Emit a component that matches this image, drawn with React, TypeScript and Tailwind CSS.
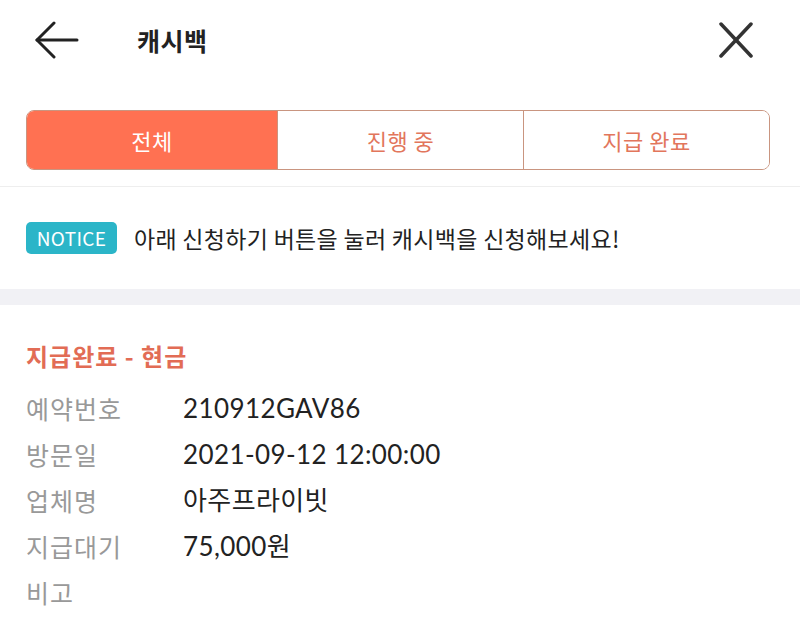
import { useState } from 'react';

const TABS = ['전체', '진행 중', '지급 완료'] as const;

const ROWS: [string, string][] = [
  ['예약번호', '210912GAV86'],
  ['방문일', '2021-09-12 12:00:00'],
  ['업체명', '아주프라이빗'],
  ['지급대기', '75,000원'],
  ['비고', ''],
];

const KR = "font-['Noto_Sans_CJK_KR',sans-serif]";
const VAL = "font-['Lato','Noto_Sans_CJK_KR',sans-serif]";

export default function App() {
  const [active, setActive] = useState(0);

  return (
    <div className={`h-[634px] w-[800px] overflow-hidden bg-white text-[#222] ${KR}`}>
      {/* Header */}
      <div className="flex h-[80px] items-center px-[35px]">
        <svg width="44" height="38" viewBox="0 0 44 38" fill="none" stroke="#222" strokeWidth="3" strokeLinecap="round" strokeLinejoin="round">
          <path d="M2 19 H42" />
          <path d="M19 2 L2 19 L19 36" />
        </svg>
        <div className="ml-[58px] text-[25px] font-bold leading-none tracking-[0.5px]">캐시백</div>
        <div className="flex-1" />
        <svg className="mr-[12px]" width="34" height="36" viewBox="0 0 34 36" fill="none" stroke="#333" strokeWidth="3.5" strokeLinecap="round">
          <path d="M2 2 L32 34" />
          <path d="M32 2 L2 34" />
        </svg>
      </div>

      {/* Tabs */}
      <div className="border-b border-[#eeeeee] pb-[16px] pl-[26px] pr-[30px] pt-[30px]">
        <div className="grid h-[60px] grid-cols-[250px_1fr_1fr] overflow-hidden rounded-[8px] border border-[#c99580]">
          {TABS.map((t, i) => (
            <button
              key={t}
              onClick={() => setActive(i)}
              className={`flex items-center justify-center text-[22px] tracking-[0.5px] ${
                i > 0 ? 'border-l border-[#c99580]' : ''
              } ${active === i ? 'bg-[#ff7152] text-white' : 'bg-white text-[#e2765c]'}`}
            >
              {t}
            </button>
          ))}
        </div>
      </div>

      {/* Notice */}
      <div className="flex h-[102px] items-center gap-[17px] px-[26px]">
        <span className="flex h-[32px] w-[91px] items-center justify-center rounded-[5px] bg-[#2bb5c8] text-[19px] tracking-[0.3px] text-white">
          NOTICE
        </span>
        <span className="text-[23px] tracking-[0.3px] text-[#222]">아래 신청하기 버튼을 눌러 캐시백을 신청해보세요!</span>
      </div>

      <div className="h-[16px] bg-[#f1f1f5]" />

      {/* Detail */}
      <div className="px-[26px] pt-[36px]">
        <div className="text-[24px] font-bold leading-[30px] tracking-[1px] text-[#e26c55]">지급완료 - 현금</div>
        <div className="mt-[22px] flex flex-col gap-[15px]">
          {ROWS.map(([label, value]) => (
            <div key={label} className="flex h-[31px] items-center">
              <span className="w-[157px] text-[25px] tracking-[1px] text-[#999]">{label}</span>
              <span className={`text-[26px] tracking-[0.4px] text-[#222] ${VAL}`}>{value}</span>
            </div>
          ))}
        </div>
      </div>
    </div>
  );
}
